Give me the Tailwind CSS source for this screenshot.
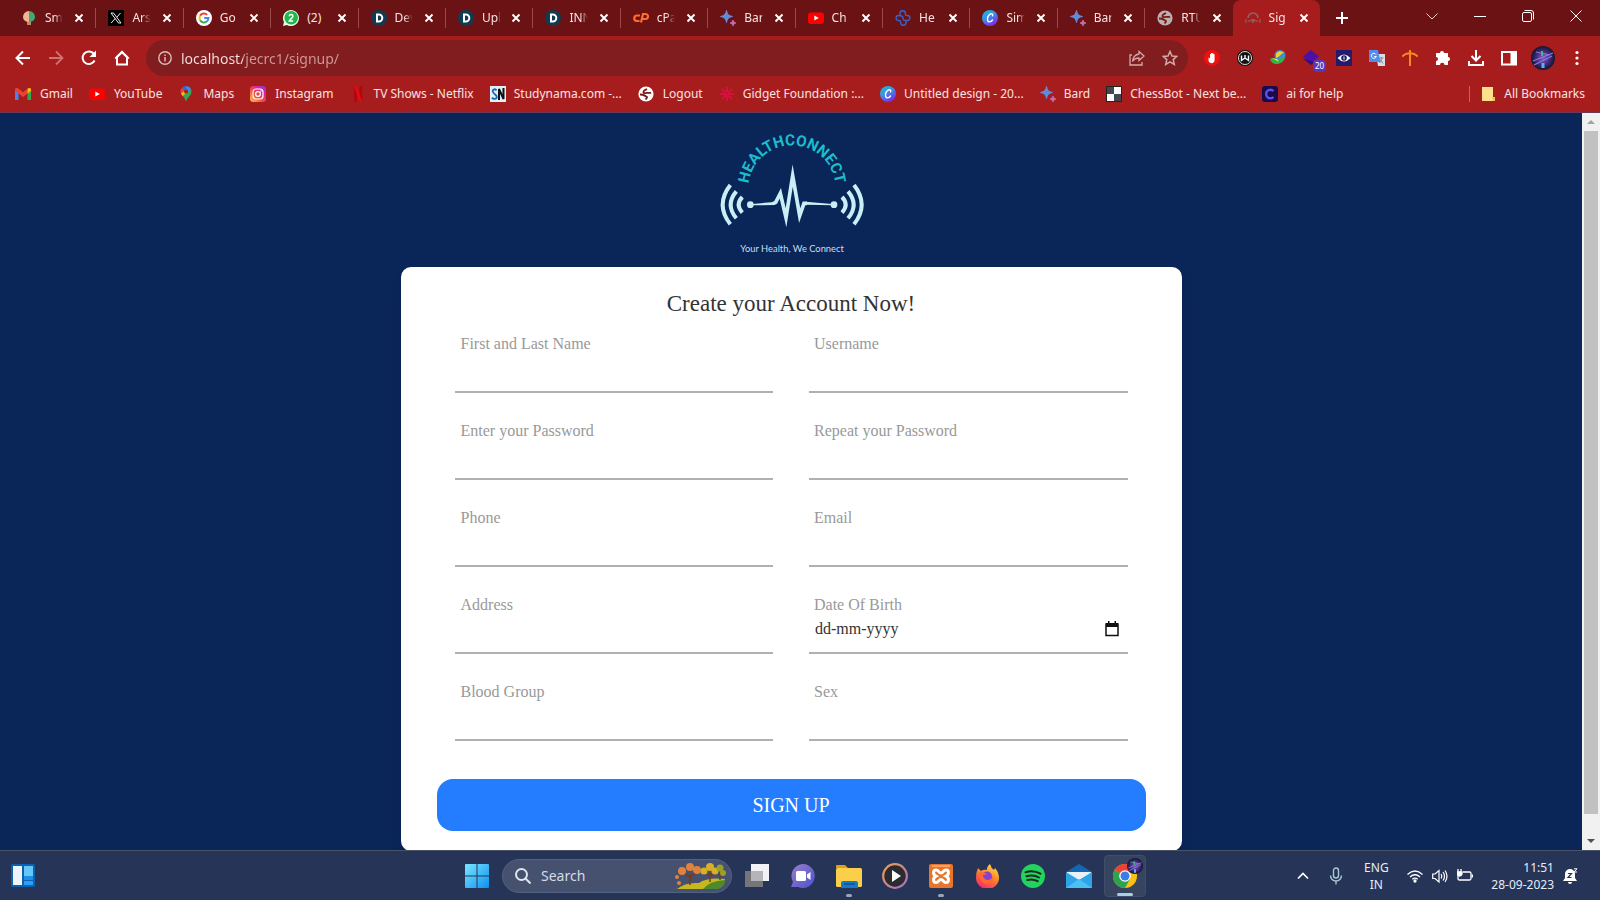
<!DOCTYPE html>
<html lang="en">
<head>
    <meta charset="UTF-8">
    <meta name="viewport" content="width=device-width, initial-scale=1.0">
    <title>Sign Up - HealthConnect</title>
    <script src="https://cdn.jsdelivr.net/npm/@tailwindcss/browser@4"></script>
</head>
<body class="h-screen flex flex-col overflow-hidden bg-[#0a2558] font-['Noto_Sans',sans-serif] text-xs text-[#f7e3e3]">

    <!-- Shared icons -->
    <svg class="absolute size-0" xmlns="http://www.w3.org/2000/svg" aria-hidden="true">
        <defs>
            <linearGradient id="bardFill" x1="0" y1="0" x2="1" y2="1">
                <stop offset="0" stop-color="#e0708a"/><stop offset=".5" stop-color="#4c90e0"/><stop offset="1" stop-color="#b06fc0"/>
            </linearGradient>
            <linearGradient id="canvaFill" x1="0" y1="0" x2=".6" y2="1">
                <stop offset="0" stop-color="#10c4cc"/><stop offset=".5" stop-color="#3f8fe8"/><stop offset="1" stop-color="#7d2ae8"/>
            </linearGradient>
            <linearGradient id="instaFill" x1="0" y1="1" x2="1" y2="0">
                <stop offset="0" stop-color="#ffc94d"/><stop offset=".4" stop-color="#f7523b"/><stop offset=".7" stop-color="#d6249f"/><stop offset="1" stop-color="#7a3ff0"/>
            </linearGradient>
            <linearGradient id="winFill" x1="0" y1="0" x2="1" y2="1">
                <stop offset="0" stop-color="#7be6ff"/><stop offset="1" stop-color="#0b90ee"/>
            </linearGradient>
            <linearGradient id="foxFill" x1=".8" y1="0" x2=".3" y2="1">
                <stop offset="0" stop-color="#ffe24a"/><stop offset=".45" stop-color="#ff8a2a"/><stop offset="1" stop-color="#f5256d"/>
            </linearGradient>
            <linearGradient id="chatFill" x1="0" y1="0" x2="1" y2="1">
                <stop offset="0" stop-color="#9a7fc8"/><stop offset="1" stop-color="#4b50d0"/>
            </linearGradient>
            <linearGradient id="ringFill" x1="0" y1="0" x2="1" y2="1">
                <stop offset="0" stop-color="#f0a050"/><stop offset="1" stop-color="#a070c8"/>
            </linearGradient>
            <radialGradient id="avatarFill">
                <stop offset="0" stop-color="#8a58c8"/><stop offset=".6" stop-color="#3c2a78"/><stop offset="1" stop-color="#15152c"/>
            </radialGradient>
            <symbol id="x" viewBox="0 0 16 16"><path d="M4.5 4.5l7 7M11.5 4.5l-7 7" stroke="#fff" stroke-width="1.9" fill="none"/></symbol>
            <symbol id="bard" viewBox="0 0 16 16">
                <path d="M6.500 .5Q7.200 5.800 12.500 6.500Q7.200 7.200 6.500 12.500Q5.800 7.200 .5 6.500Q5.800 5.800 6.500 .5z" fill="url(#bardFill)" stroke="url(#bardFill)"/>
                <path d="M13 10Q13.300 12.700 16 13Q13.300 13.300 13 16Q12.700 13.300 10 13Q12.700 12.700 13 10z" fill="#c070b0" stroke="#c070b0" stroke-width=".8"/>
            </symbol>
            <symbol id="youtube" viewBox="0 0 16 16"><rect y="2.500" width="16" height="11.500" rx="3" fill="#f00"/><path d="M6.300 5.600v5L10.800 8z" fill="#fff"/></symbol>
            <symbol id="canva" viewBox="0 0 16 16">
                <circle cx="8" cy="8" r="8" fill="url(#canvaFill)"/>
                <path d="M10.600 5.800c.6-1.800-.7-2.500-2.100-1.900C6.200 4.900 5 8 5.600 10.200c.6 2.300 3.200 2.200 4.900-.2" fill="none" stroke="#fff" stroke-width="1.400" stroke-linecap="round"/>
            </symbol>
            <symbol id="dee" viewBox="0 0 16 16">
                <circle cx="8" cy="8" r="8" fill="#123a52"/>
                <path d="M6 4.500h1.800a3.500 3.500 0 0 1 0 7H6z" fill="none" stroke="#fff" stroke-width="2"/>
            </symbol>
            <symbol id="globe" viewBox="0 0 16 16">
                <circle cx="8" cy="8" r="7.600" fill="currentColor"/>
                <path d="M9 3c-1 .5-3 1-3.500 2.500s1 2 2.500 1.500 4 .5 5-.5M2 8.500c2 0 3.500 0 4.500 1s2 .6 2.500 1.500-.5 1.500-1.500 2.500" fill="none" stroke="#7a1617" stroke-width="1.800"/>
            </symbol>
            <symbol id="avatar" viewBox="0 0 24 24">
                <circle cx="12" cy="12" r="12" fill="url(#avatarFill)"/>
                <path d="M2 15l20-8M3 19l18-9M5 6l14 3" stroke="#8c7be0" stroke-width="1.200"/>
                <path d="M11 5v5" stroke="#38c070" stroke-width="2"/><path d="M12 17v5" stroke="#5ab0f0" stroke-width="3"/>
            </symbol>
        </defs>
    </svg>

    <!-- Tab strip -->
    <header class="shrink-0 bg-[#a71d1e]">
        <div class="h-9 flex bg-[#6b1214]">
            <div class="ml-[9px] flex-1 max-w-[1311px] grid grid-cols-15 items-center">
                <div class="flex items-center h-5 pl-3 pr-2 border-r border-[#9b4a4b]">
                    <svg class="size-4 shrink-0" viewBox="0 0 16 16"><path d="M8 1a6 6 0 0 0-6 6c0 3 3 5 6 5z" fill="#f0b490"/><path d="M8 1a6 6 0 0 1 6 6c0 3-3 5-6 5z" fill="#3fa878"/><path d="M6 12h4v3H6z" fill="#c08868"/></svg>
                    <span class="ml-2 flex-1 overflow-hidden whitespace-nowrap [mask-image:linear-gradient(to_right,#000_50%,transparent)]">Sm</span>
                    <button class="ml-2" aria-label="Close tab"><svg class="size-4"><use href="#x"/></svg></button>
                </div>
                <div class="flex items-center h-5 pl-3 pr-2 border-r border-[#9b4a4b]">
                    <svg class="size-4 shrink-0" viewBox="0 0 16 16"><path d="M0 0h16v16H0z" fill="#000"/><path d="M3 3h2.500L13 13h-2.500zM12.500 3L8.800 7.200M3.200 13l4-4.500" fill="none" stroke="#eee"/></svg>
                    <span class="ml-2 flex-1 overflow-hidden whitespace-nowrap [mask-image:linear-gradient(to_right,#000_50%,transparent)]">Ars</span>
                    <button class="ml-2" aria-label="Close tab"><svg class="size-4"><use href="#x"/></svg></button>
                </div>
                <div class="flex items-center h-5 pl-3 pr-2 border-r border-[#9b4a4b]">
                    <svg class="size-4 shrink-0" viewBox="0 0 16 16"><circle cx="8" cy="8" r="8" fill="#fff"/><g fill="none" stroke-width="2"><path d="M11.200 4.900A4.500 4.500 0 0 0 4.100 5.800" stroke="#ea4335"/><path d="M4.100 5.800a4.500 4.500 0 0 0 0 4.400" stroke="#fbbc05"/><path d="M4.100 10.200a4.500 4.500 0 0 0 6.900 1.100" stroke="#34a853"/><path d="M11 11.300A4.500 4.500 0 0 0 12.500 8H8.200" stroke="#4285f4"/></g></svg>
                    <span class="ml-2 flex-1 overflow-hidden whitespace-nowrap [mask-image:linear-gradient(to_right,#000_80%,transparent)]">Go</span>
                    <button class="ml-2" aria-label="Close tab"><svg class="size-4"><use href="#x"/></svg></button>
                </div>
                <div class="flex items-center h-5 pl-3 pr-2 border-r border-[#9b4a4b]">
                    <svg class="size-4 shrink-0" viewBox="0 0 16 16"><path d="M0 16l1-4a8 8 0 1 1 3 3z" fill="#e8fbe8"/><circle cx="8.200" cy="7.800" r="6.800" fill="#1fb84a"/><path d="M6.200 6.200c.2-2.400 4-2.200 3.700.2-.2 1.500-3 2.800-3.600 4.600H10.200" fill="none" stroke="#fff" stroke-width="1.500"/></svg>
                    <span class="ml-2 flex-1 overflow-hidden whitespace-nowrap">(2)</span>
                    <button class="ml-2" aria-label="Close tab"><svg class="size-4"><use href="#x"/></svg></button>
                </div>
                <div class="flex items-center h-5 pl-3 pr-2 border-r border-[#9b4a4b]">
                    <svg class="size-4 shrink-0"><use href="#dee"/></svg>
                    <span class="ml-2 flex-1 overflow-hidden whitespace-nowrap [mask-image:linear-gradient(to_right,#000_50%,transparent)]">Dev</span>
                    <button class="ml-2" aria-label="Close tab"><svg class="size-4"><use href="#x"/></svg></button>
                </div>
                <div class="flex items-center h-5 pl-3 pr-2 border-r border-[#9b4a4b]">
                    <svg class="size-4 shrink-0"><use href="#dee"/></svg>
                    <span class="ml-2 flex-1 overflow-hidden whitespace-nowrap [mask-image:linear-gradient(to_right,#000_90%,transparent)]">Upl</span>
                    <button class="ml-2" aria-label="Close tab"><svg class="size-4"><use href="#x"/></svg></button>
                </div>
                <div class="flex items-center h-5 pl-3 pr-2 border-r border-[#9b4a4b]">
                    <svg class="size-4 shrink-0"><use href="#dee"/></svg>
                    <span class="ml-2 flex-1 overflow-hidden whitespace-nowrap [mask-image:linear-gradient(to_right,#000_60%,transparent)]">INN</span>
                    <button class="ml-2" aria-label="Close tab"><svg class="size-4"><use href="#x"/></svg></button>
                </div>
                <div class="flex items-center h-5 pl-3 pr-2 border-r border-[#9b4a4b]">
                    <svg class="size-4 shrink-0" viewBox="0 0 16 16"><path d="M7 5.500H4a2.700 2.700 0 0 0 0 5.500h2.500M8 12.500L10 4h2.500a2.400 2.400 0 0 1 0 5H9.800" fill="none" stroke="#ff6c2c" stroke-width="2.200"/></svg>
                    <span class="ml-2 flex-1 overflow-hidden whitespace-nowrap [mask-image:linear-gradient(to_right,#000_50%,transparent)]">cPa</span>
                    <button class="ml-2" aria-label="Close tab"><svg class="size-4"><use href="#x"/></svg></button>
                </div>
                <div class="flex items-center h-5 pl-3 pr-2 border-r border-[#9b4a4b]">
                    <svg class="size-4 shrink-0"><use href="#bard"/></svg>
                    <span class="ml-2 flex-1 overflow-hidden whitespace-nowrap [mask-image:linear-gradient(to_right,#000_90%,transparent)]">Bar</span>
                    <button class="ml-2" aria-label="Close tab"><svg class="size-4"><use href="#x"/></svg></button>
                </div>
                <div class="flex items-center h-5 pl-3 pr-2 border-r border-[#9b4a4b]">
                    <svg class="size-4 shrink-0"><use href="#youtube"/></svg>
                    <span class="ml-2 flex-1 overflow-hidden whitespace-nowrap [mask-image:linear-gradient(to_right,#000_70%,transparent)]">Ch</span>
                    <button class="ml-2" aria-label="Close tab"><svg class="size-4"><use href="#x"/></svg></button>
                </div>
                <div class="flex items-center h-5 pl-3 pr-2 border-r border-[#9b4a4b]">
                    <svg class="size-4 shrink-0" viewBox="0 0 16 16"><path d="M5 5.500V3.500a2.700 2.700 0 0 1 5.400 0c0 2 .2 2 2 2a2.500 2.500 0 0 1 0 5H11v2a2.700 2.700 0 0 1-5.400 0c0-2-.2-2-2-2a2.500 2.500 0 0 1 0-5c2 0 4.400 0 4.400 2.500s1 2.500 3 2.500" fill="none" stroke="#3a62c8" stroke-width="1.400"/></svg>
                    <span class="ml-2 flex-1 overflow-hidden whitespace-nowrap [mask-image:linear-gradient(to_right,#000_80%,transparent)]">He</span>
                    <button class="ml-2" aria-label="Close tab"><svg class="size-4"><use href="#x"/></svg></button>
                </div>
                <div class="flex items-center h-5 pl-3 pr-2 border-r border-[#9b4a4b]">
                    <svg class="size-4 shrink-0"><use href="#canva"/></svg>
                    <span class="ml-2 flex-1 overflow-hidden whitespace-nowrap [mask-image:linear-gradient(to_right,#000_60%,transparent)]">Sim</span>
                    <button class="ml-2" aria-label="Close tab"><svg class="size-4"><use href="#x"/></svg></button>
                </div>
                <div class="flex items-center h-5 pl-3 pr-2 border-r border-[#9b4a4b]">
                    <svg class="size-4 shrink-0"><use href="#bard"/></svg>
                    <span class="ml-2 flex-1 overflow-hidden whitespace-nowrap [mask-image:linear-gradient(to_right,#000_90%,transparent)]">Bar</span>
                    <button class="ml-2" aria-label="Close tab"><svg class="size-4"><use href="#x"/></svg></button>
                </div>
                <div class="flex items-center h-5 pl-3 pr-2">
                    <svg class="size-4 shrink-0 text-[#b9b0b0]"><use href="#globe"/></svg>
                    <span class="ml-2 flex-1 overflow-hidden whitespace-nowrap [mask-image:linear-gradient(to_right,#000_60%,transparent)]">RTU</span>
                    <button class="ml-2" aria-label="Close tab"><svg class="size-4"><use href="#x"/></svg></button>
                </div>
                <div class="flex items-center h-9 pl-3 pr-2 rounded-t-lg bg-[#a71d1e]">
                    <svg class="size-4 shrink-0" viewBox="0 0 16 16" fill="none" stroke="#8a6a66"><path d="M3 8a5 5 0 0 1 10 0" stroke-width="1.500"/><path d="M3 11h3l1-2 1 4 1-4 1 2h3M1 9v4M15 9v4"/></svg>
                    <span class="ml-2 flex-1 overflow-hidden whitespace-nowrap [mask-image:linear-gradient(to_right,#000_80%,transparent)]">Sig</span>
                    <button class="ml-2" aria-label="Close tab"><svg class="size-4"><use href="#x"/></svg></button>
                </div>
            </div>
            <button class="w-11 flex justify-center items-center" aria-label="New tab"><svg class="size-4" viewBox="0 0 16 16"><path d="M8 2v12M2 8h12" stroke="#fff" stroke-width="2"/></svg></button>
            <div class="ml-auto h-8 flex">
                <button class="w-12 flex justify-center items-center" aria-label="Search tabs"><svg class="size-3" viewBox="0 0 12 12"><path d="M.5 3.500L6 9l5.500-5.500" fill="none" stroke="#e8d0d0"/></svg></button>
                <button class="w-12 flex justify-center items-center" aria-label="Minimize"><svg class="size-3" viewBox="0 0 12 12"><path d="M0 6.500h12" stroke="#fff"/></svg></button>
                <button class="w-12 flex justify-center items-center" aria-label="Restore"><svg class="size-3" viewBox="0 0 12 12" fill="none" stroke="#fff"><rect x=".5" y="2.500" width="9" height="9" rx="1.500"/><path d="M2.500.500H9a2.500 2.500 0 0 1 2.500 2.500v6.500"/></svg></button>
                <button class="w-12 flex justify-center items-center" aria-label="Close"><svg class="size-3" viewBox="0 0 12 12"><path d="M.5.500l11 11M11.500.500l-11 11" stroke="#fff"/></svg></button>
            </div>
        </div>

        <!-- Toolbar -->
        <div class="pt-1 px-[15px] flex items-center">
            <div class="flex gap-[17px] text-white">
                <button aria-label="Back"><svg class="size-4" viewBox="0 0 16 16" fill="none" stroke="currentColor" stroke-width="2"><path d="M15 8H2M8 1.500L1.500 8 8 14.500"/></svg></button>
                <button class="text-[#d07172]" aria-label="Forward"><svg class="size-4" viewBox="0 0 16 16" fill="none" stroke="currentColor" stroke-width="1.800"><path d="M1 8h13M8 1.500L14.500 8 8 14.500"/></svg></button>
                <button aria-label="Reload"><svg class="size-4" viewBox="0 0 16 16"><path d="M13.600 10.500A6.300 6.300 0 1 1 12.600 3.500" fill="none" stroke="currentColor" stroke-width="2"/><path d="M15 .500V7H8.500z" fill="currentColor"/></svg></button>
                <button aria-label="Home"><svg class="size-4" viewBox="0 0 16 16"><path d="M3 14.500V7L8 2.200 13 7v7.500z" fill="none" stroke="currentColor" stroke-width="2"/><path d="M1 8.500l7-7 7 7" fill="none" stroke="currentColor" stroke-width="1.500"/></svg></button>
            </div>
            <div class="ml-4 flex-1 h-9 pl-3 pr-2.5 flex items-center rounded-full bg-[#821d1f] text-sm">
                <svg class="size-3.5 shrink-0" viewBox="0 0 14 14"><circle cx="7" cy="7" r="6.200" fill="none" stroke="#d8bcbc" stroke-width="1.400"/><path d="M7 6v4.500M7 3.500v1.500" stroke="#d8bcbc" stroke-width="1.500"/></svg>
                <label class="sr-only" for="url">Address</label>
                <input id="url" type="text" value="localhost/jecrc1/signup/" class="ml-[9px] flex-1 h-6 outline-none bg-linear-to-r from-[#f7e3e3] from-[62px] to-[#cf9a9a] to-[62px] bg-clip-text text-transparent">
                <button class="text-[#d3a9a9]" aria-label="Share"><svg class="size-4" viewBox="0 0 16 16" fill="none" stroke="currentColor" stroke-width="1.300"><path d="M3 5H1v10h12v-3M10 1.500l5 4.500-5 4.500V8C7 8 5 9 3.500 11.500 4 7.500 6 4.500 10 4z"/></svg></button>
                <button class="ml-[17px] text-[#d3a9a9]" aria-label="Bookmark"><svg class="size-4" viewBox="0 0 16 16" fill="none" stroke="currentColor" stroke-width="1.500"><path d="M8 1.500l2 4.500 4.800.400-3.600 3.200 1.100 4.800L8 11.900l-4.300 2.500 1.100-4.800L1.200 6.400 6 6z"/></svg></button>
            </div>
            <div class="ml-4 flex items-center gap-[17px]">
                <button aria-label="Ad blocker"><svg class="size-4" viewBox="0 0 16 16"><circle cx="8" cy="8" r="8" fill="#f01010"/><path d="M4.500 7.500l1.500 1V4h1v3V3h1.200v4V3.200h1.200v4V4.300h1.200V10c0 4-5 4-6 1z" fill="#fff"/></svg></button>
                <button aria-label="Wappalyzer"><svg class="size-4" viewBox="0 0 16 16"><circle cx="8" cy="8" r="8" fill="#111"/><circle cx="8" cy="8" r="6.500" fill="none" stroke="#ddd"/><path d="M4.500 5.500v5L8 8l3.500 2.500v-5M8 5v3" fill="none" stroke="#fff" stroke-width="1.400"/></svg></button>
                <button aria-label="Download manager"><svg class="size-4" viewBox="0 0 16 16"><circle cx="10" cy="5.500" r="5.500" fill="#3f8fd0"/><path d="M6 4c2-4 6-3 8-1-3 0-3 3-8 5z" fill="#e8d040"/><path d="M0 9c3-2 5-1 6 1l9-3c-1 5-5 7-8 7-4 0-6-2-7-5z" fill="#38b048"/><path d="M2 8l5 1 2 3z" fill="#f2e84a"/></svg></button>
                <button class="relative" aria-label="Tab stack, 20">
                    <svg class="size-4" viewBox="0 0 16 16"><path d="M8 0l8 6.500L8 13 0 6.500z" fill="#4a10a8"/><path d="M0 8.500L8 15l4-3-4-1z" fill="#360a80"/></svg>
                    <span class="absolute left-2.5 top-2.5 h-3 px-0.5 rounded-sm bg-[#5a35c0] text-[8px] leading-3 text-white">20</span>
                </button>
                <button aria-label="Reader"><svg class="size-4" viewBox="0 0 16 16"><path d="M0 0h16v16H0z" fill="#241a6a"/><path d="M1.500 8Q8 1 14.500 8 8 15 1.500 8z" fill="#fff"/><circle cx="8" cy="8" r="2.800" fill="#241a6a"/><path d="M8 6.500v3" stroke="#fff"/></svg></button>
                <button aria-label="Translate"><svg class="size-4" viewBox="0 0 16 16"><path d="M7 4h9v12H9z" fill="#d8dde2"/><path d="M0 0h9l2.500 12H0z" fill="#4f8df0"/><path d="M7 4.500a2.500 2.500 0 1 0 .3 2H5.200" fill="none" stroke="#fff"/><path d="M10.500 8h4M12.500 7v1c0 2-1 4-2 5M11.500 9.500l2.500 4" stroke="#7a8a98" fill="none"/></svg></button>
                <button aria-label="Pickaxe"><svg class="size-4" viewBox="0 0 16 16" fill="none" stroke="#f58a1c" stroke-width="2"><path d="M8 0v16M0 6.500Q3 3.500 8 3 13 3.500 16 6.500"/></svg></button>
                <button aria-label="Extensions"><svg class="size-4" viewBox="0 0 16 16"><path d="M5 3a2 2 0 0 1 4 0h4v4a2 2 0 0 1 0 4v4H9.500a2.200 2.200 0 0 0-4.500 0H1v-4a2 2 0 0 0 0-4V3z" fill="#fff"/></svg></button>
                <button aria-label="Downloads"><svg class="size-4" viewBox="0 0 16 16" fill="none" stroke="#fff" stroke-width="2"><path d="M8 0v10M3.500 6L8 10.500 12.500 6M1 11v4h14v-4"/></svg></button>
                <button aria-label="Side panel"><svg class="size-4" viewBox="0 0 16 16"><path d="M1 2h14v12.500H1z" fill="none" stroke="#fff" stroke-width="2"/><path d="M9.500 2H15v12H9.500z" fill="#fff"/></svg></button>
                <button class="-mx-[3px]" aria-label="Profile"><svg class="size-6"><use href="#avatar"/></svg></button>
                <button aria-label="Menu"><svg class="size-4" viewBox="0 0 16 16" fill="#fff"><circle cx="8" cy="2.500" r="1.600"/><circle cx="8" cy="8" r="1.600"/><circle cx="8" cy="13.500" r="1.600"/></svg></button>
            </div>
        </div>

        <!-- Bookmarks -->
        <nav class="h-[37px] px-[15px] flex items-center gap-4 border-b border-[#6d3858] whitespace-nowrap">
            <a href="#" class="flex items-center gap-[9px]">
                <svg class="size-4" viewBox="0 0 16 16"><path d="M0 4v10h3.500V6z" fill="#4285f4"/><path d="M16 4v10h-3.500V6z" fill="#34a853"/><path d="M0 3.500C0 2 2 1.500 3.500 2.700L8 6.200l4.500-3.500V7.500L8 11 3.500 7.500 0 5z" fill="#ea4335"/><path d="M12.500 2.700C14 1.500 16 2 16 3.500V5l-3.500 2.500z" fill="#fbbc04"/></svg>
                <span>Gmail</span>
            </a>
            <a href="#" class="flex items-center gap-[9px]"><svg class="size-4"><use href="#youtube"/></svg><span>YouTube</span></a>
            <a href="#" class="flex items-center gap-[9px]">
                <svg class="size-4" viewBox="0 0 16 16"><path d="M8 0a5.500 5.500 0 0 0-4.200 2L8 5.500z" fill="#1a73e8"/><path d="M3.800 2a5.500 5.500 0 0 0-.6 6L8 5z" fill="#ea4335"/><path d="M3 7.500C4 10 7 11 8 16c.8-4.500 5.500-6 5.500-10.500 0-1-.2-2-.7-2.700z" fill="#34a853"/><path d="M3 7.500l1.800 2.700L9.500 5 8 4z" fill="#fbbc04"/><path d="M8 0c2 0 4 1.200 4.900 3L8.500 8z" fill="#4285f4"/><circle cx="8" cy="5.500" r="2" fill="#a71d1e"/></svg>
                <span>Maps</span>
            </a>
            <a href="#" class="flex items-center gap-[9px]">
                <svg class="size-4" viewBox="0 0 16 16"><rect width="16" height="16" rx="3.500" fill="url(#instaFill)"/><g fill="none" stroke="#fff" stroke-width="1.200"><rect x="3" y="3" width="10" height="10" rx="3"/><circle cx="8" cy="8" r="2.400"/></g><circle cx="11" cy="5" r=".8" fill="#fff"/></svg>
                <span>Instagram</span>
            </a>
            <a href="#" class="flex items-center gap-2">
                <svg class="size-4" viewBox="0 0 16 16"><path d="M4 0h2.800v16H4zM9.500 0h2.800v16H9.500z" fill="#b00710"/><path d="M4 0h2.800l5.500 16H9.500z" fill="#e50914"/></svg>
                <span>TV Shows - Netflix</span>
            </a>
            <a href="#" class="flex items-center gap-2">
                <svg class="size-4" viewBox="0 0 16 16"><path d="M0 0h16v16H0z" fill="#dff0fa"/><path d="M6.500 4.500C5.500 2.500 2.500 3 2.800 5.500S7 8.500 6.800 11 3 13.500 2 11.500" fill="none" stroke="#1a66b0" stroke-width="1.800"/><path d="M9 14V3l4.500 10V2" fill="none" stroke="#111" stroke-width="2"/></svg>
                <span>Studynama.com -...</span>
            </a>
            <a href="#" class="flex items-center gap-[9px]"><svg class="size-4 text-white"><use href="#globe"/></svg><span>Logout</span></a>
            <a href="#" class="flex items-center gap-2">
                <svg class="size-4" viewBox="0 0 16 16" stroke="#d8103c" stroke-width="2"><path d="M8 1v14M1 8h14M3 3l10 10M13 3L3 13" stroke-dasharray="5.500 2 20"/></svg>
                <span>Gidget Foundation :...</span>
            </a>
            <a href="#" class="flex items-center gap-2"><svg class="size-4"><use href="#canva"/></svg><span>Untitled design - 20...</span></a>
            <a href="#" class="flex items-center gap-2"><svg class="size-4"><use href="#bard"/></svg><span>Bard</span></a>
            <a href="#" class="flex items-center gap-2">
                <svg class="size-4" viewBox="0 0 16 16"><path d="M0 0h16v16H0z" fill="#222"/><path d="M1 1h7v7H1zM8 8h7v7H8z" fill="#444650"/><path d="M8 1h7v7H8zM1 8h7v7H1z" fill="#fff"/></svg>
                <span>ChessBot - Next be...</span>
            </a>
            <a href="#" class="flex items-center gap-2">
                <svg class="size-4" viewBox="0 0 16 16"><rect width="16" height="16" rx="3" fill="#1b0a4a"/><path d="M11.500 5A4.300 4.300 0 1 0 11.500 11" fill="none" stroke="#5a50f0" stroke-width="2.400"/></svg>
                <span>ai for help</span>
            </a>
            <a href="#" class="ml-auto h-4 pl-2.5 flex items-center gap-2 border-l border-[#c65f60]">
                <svg class="size-4" viewBox="0 0 16 16"><path d="M2 1h11v10h2v4H2z" fill="#ffe08a"/><path d="M12 11h3v4h-2z" fill="#f0c050"/></svg>
                <span>All Bookmarks</span>
            </a>
        </nav>
    </header>

    <!-- Page -->
    <div class="flex-1 min-h-0 flex">
        <main class="flex-1 overflow-hidden flex flex-col items-center font-['Liberation_Serif',serif]">
            <svg class="mt-0.5 shrink-0 w-[200px] h-[150px]" viewBox="0 0 600 450" role="img" aria-label="HealthConnect">
                <path id="arc" d="M172 222a131 131 0 0 1 262 0" fill="none"/>
                <text class="font-['Roboto',sans-serif] font-bold" font-size="46" fill="#1cbccb" text-anchor="middle"><textPath href="#arc" startOffset="50%">HEALTHCONNECT</textPath></text>
                <g fill="none" stroke="#c8eff5" stroke-width="12">
                    <path d="M118 210Q72 269 118 328M136 229Q102 269 136 310M154 246Q132 269 154 293"/>
                    <path d="M489 210Q535 269 489 328M471 229Q505 269 471 310M453 246Q475 269 453 293"/>
                    <path d="M246 266L254 262 268 235 285 308 305 182 326 302 339 265 348 265" stroke-width="11" stroke-miterlimit="10"/>
                </g>
                <g fill="#c8eff5">
                    <circle cx="178" cy="269" r="10"/><circle cx="429" cy="269" r="10"/>
                    <path d="M183 267l67-6v9l-67 1zM424 267l-80-7v9l80 2z"/>
                </g>
                <text class="font-['Lato',sans-serif]" x="303" y="410" font-size="28" fill="#c8dfee" text-anchor="middle">Your Health, We Connect</text>
            </svg>

            <form class="mt-0.5 shrink-0 w-full max-w-[781px] px-9 pt-[21px] pb-5 rounded-[10px] bg-white shadow-lg">
                <h1 class="text-[23px] leading-8 text-center text-[#333]">Create your Account Now!</h1>
                <div class="mt-3 px-[18px] grid grid-cols-2 gap-x-9 gap-y-[26px] text-base leading-6 text-[#999]">
                    <div>
                        <label for="name" class="block pl-1.5">First and Last Name</label>
                        <input id="name" type="text" class="block w-full h-[37px] px-1.5 border-b-2 border-[#b0b0b0] outline-none">
                    </div>
                    <div>
                        <label for="username" class="block pl-[5px]">Username</label>
                        <input id="username" type="text" class="block w-full h-[37px] px-1.5 border-b-2 border-[#b0b0b0] outline-none">
                    </div>
                    <div>
                        <label for="password" class="block pl-1.5">Enter your Password</label>
                        <input id="password" type="password" class="block w-full h-[37px] px-1.5 border-b-2 border-[#b0b0b0] outline-none">
                    </div>
                    <div>
                        <label for="repeat" class="block pl-[5px]">Repeat your Password</label>
                        <input id="repeat" type="password" class="block w-full h-[37px] px-1.5 border-b-2 border-[#b0b0b0] outline-none">
                    </div>
                    <div>
                        <label for="phone" class="block pl-1.5">Phone</label>
                        <input id="phone" type="tel" class="block w-full h-[37px] px-1.5 border-b-2 border-[#b0b0b0] outline-none">
                    </div>
                    <div>
                        <label for="email" class="block pl-[5px]">Email</label>
                        <input id="email" type="email" class="block w-full h-[37px] px-1.5 border-b-2 border-[#b0b0b0] outline-none">
                    </div>
                    <div>
                        <label for="address" class="block pl-1.5">Address</label>
                        <input id="address" type="text" class="block w-full h-[37px] px-1.5 border-b-2 border-[#b0b0b0] outline-none">
                    </div>
                    <div>
                        <label for="dob" class="block pl-[5px]">Date Of Birth</label>
                        <div class="h-[37px] pl-1.5 pr-2 pb-3 flex items-center border-b-2 border-[#b0b0b0]">
                            <input id="dob" type="text" placeholder="dd-mm-yyyy" class="flex-1 outline-none placeholder:text-[#333]">
                            <button type="button" aria-label="Open calendar"><svg class="size-4 block" viewBox="0 0 16 16"><path d="M2 3h12v11.500H2z" fill="none" stroke="#111" stroke-width="1.500"/><path d="M2 2h12v4H2zM4 0h1.500v3H4zM10.500 0H12v3h-1.500z" fill="#111"/></svg></button>
                        </div>
                    </div>
                    <div>
                        <label for="blood" class="block pl-1.5">Blood Group</label>
                        <input id="blood" type="text" class="block w-full h-[37px] px-1.5 border-b-2 border-[#b0b0b0] outline-none">
                    </div>
                    <div>
                        <label for="sex" class="block pl-[5px]">Sex</label>
                        <input id="sex" type="text" class="block w-full h-[37px] px-1.5 border-b-2 border-[#b0b0b0] outline-none">
                    </div>
                </div>
                <button type="submit" class="mt-[38px] w-full h-[52px] rounded-2xl bg-[#247cff] text-xl text-white">SIGN UP</button>
            </form>
        </main>

        <!-- Scrollbar -->
        <div class="w-[18px] flex flex-col items-center justify-between bg-[#f1f1f1]">
            <svg class="w-4 h-[18px] shrink-0" viewBox="0 0 16 18"><path d="M4 11l4-4 4 4z" fill="#a3a3a3"/></svg>
            <div class="flex-1 w-3.5 bg-[#c1c1c1]"></div>
            <div class="h-[18px]"></div>
            <svg class="w-4 h-[18px] shrink-0" viewBox="0 0 16 18"><path d="M4 7l4 4 4-4z" fill="#505050"/></svg>
        </div>
    </div>

    <!-- Taskbar -->
    <footer class="h-[50px] shrink-0 grid grid-cols-[1fr_auto_1fr] items-center bg-[#263557] border-t border-[#4a5364] text-[#e8edf5]">
        <button class="ml-[11px] justify-self-start" aria-label="Widgets">
            <svg class="size-6" viewBox="0 0 24 24"><rect width="24" height="23" rx="2" fill="#0c62b0"/><path d="M2 2h9v19H2z" fill="#f0f4f8"/><path d="M13 2h9v10h-9z" fill="#63c8f5"/><path d="M13 12h9v4h-9z" fill="#1f8ee8"/><path d="M13 17h9v4h-9z" fill="#2f9ff2"/></svg>
        </button>
        <div class="pl-0.5 flex items-center gap-1">
            <button class="w-[42px] h-[42px] flex justify-center items-center" aria-label="Start"><svg class="size-6" viewBox="0 0 24 24"><path d="M0 1q0-1 1-1h10.500v11.500H0zM12.500 0H23q1 0 1 1v10.500H12.500zM0 12.500h11.500V24H1q-1 0-1-1zM12.500 12.500H24V23q0 1-1 1H12.500z" fill="url(#winFill)"/></svg></button>
            <label class="w-[230px] h-[34px] pl-3 pr-1 flex items-center rounded-full bg-[#45516e] border border-[#536080]">
                <svg class="size-4 shrink-0" viewBox="0 0 16 16" fill="none" stroke="#dfe5ee" stroke-width="2"><circle cx="6.500" cy="6.500" r="5.500"/><path d="M10.500 10.500l5 5"/></svg>
                <input type="search" placeholder="Search" aria-label="Search" class="ml-2.5 flex-1 min-w-0 text-sm outline-none placeholder:text-[#d5dbe6]">
                <svg class="w-[54px] h-7 shrink-0" viewBox="0 0 54 28">
                    <path d="M4 27q8-7 22-6 8-6 26-4-1 9-9 10z" fill="#c8b820"/><path d="M30 27q6-8 22-9 0 8-8 9z" fill="#4f8a2a"/>
                    <path d="M17 23V12M17 16l-5-5M17 16l7-7M37 20V11M37 14l-5-4M37 14l6-5M47 18v-8" stroke="#7a3a1a" stroke-width="1.500"/>
                    <g fill="#e0823c"><circle cx="9" cy="9" r="4"/><circle cx="17" cy="5" r="4"/><circle cx="24" cy="8" r="4"/><circle cx="4" cy="15" r="2"/><circle cx="6" cy="21" r="2"/></g>
                    <g fill="#d8b028"><circle cx="31" cy="9" r="3.500"/><circle cx="37" cy="5" r="4"/><circle cx="42" cy="9" r="3.500"/></g>
                    <g fill="#9aa028"><circle cx="47" cy="6" r="3.500"/><circle cx="50" cy="11" r="3"/></g>
                </svg>
            </label>
            <button class="w-[42px] h-[42px] flex justify-center items-center" aria-label="Task view"><svg class="size-6" viewBox="0 0 24 24"><path d="M0 7h18v16H0z" fill="#74767a"/><path d="M6 0h18v17H6z" fill="#f2f2f4"/><path d="M6 7h12v10H6z" fill="#b4b5b8"/></svg></button>
            <button class="w-[42px] h-[42px] flex justify-center items-center" aria-label="Chat"><svg class="size-6" viewBox="0 0 24 24"><path d="M12 0a12 12 0 1 1-5 23H0l2-5A12 12 0 0 1 12 0z" fill="url(#chatFill)"/><rect x="5" y="7" width="10" height="10" rx="1.500" fill="#fff"/><path d="M16 10.500l3.500-2.500v8L16 13.500z" fill="#fff"/></svg></button>
            <button class="relative w-[42px] h-[42px] flex justify-center items-center" aria-label="File Explorer">
                <svg class="w-[26px] h-6" viewBox="0 0 26 24"><path d="M0 2q0-1 1-1h8l3 3H0z" fill="#e0a010"/><rect y="4" width="26" height="19" rx="1.500" fill="#fbcf4a"/><path d="M5 24v-5q0-2 2-2h13q2 0 2 2v5z" fill="#1878c8"/><path d="M8 20h11" stroke="#0c4f90" stroke-width="1.500"/></svg>
                <span class="absolute bottom-0 w-1.5 h-[3px] rounded-full bg-[#9ba5b8]"></span>
            </button>
            <button class="w-[42px] h-[42px] flex justify-center items-center" aria-label="Media Player"><svg class="size-[26px]" viewBox="0 0 26 26"><circle cx="13" cy="13" r="11.800" fill="#2c2c30" stroke="url(#ringFill)" stroke-width="2.200"/><path d="M10 7v12l9-6z" fill="#fff"/></svg></button>
            <button class="relative w-[42px] h-[42px] flex justify-center items-center" aria-label="XAMPP">
                <svg class="size-6" viewBox="0 0 24 24"><rect width="24" height="24" rx="2" fill="#e8752a"/><path d="M3 2h18" stroke="#f8d0b0"/><path d="M7 6c3 0 2.500 3 5 3s2-3 5-3 3.500 4.500 0 6.200c3.500 1.800 3 6.300 0 6.300s-2.500-3-5-3-2 3-5 3-3.500-4.500 0-6.300C3.500 10.500 4 6 7 6z" fill="none" stroke="#fff" stroke-width="3"/></svg>
                <span class="absolute bottom-0 w-1.5 h-[3px] rounded-full bg-[#9ba5b8]"></span>
            </button>
            <button class="w-[42px] h-[42px] flex justify-center items-center" aria-label="Firefox"><svg class="size-6" viewBox="0 0 24 24"><path d="M3 4l3 3q3-2 6-1-1-3 3-6 1 4 4 6l1-2q4 5 4 10a11.500 11 0 0 1-23 0Q1 8 3 4z" fill="url(#foxFill)"/><circle cx="12" cy="12.500" r="5" fill="#8a3fd0"/><path d="M4 9q4-2 8 1-2 1-4 1 0 4 4 5 5 0 6-4 1 7-6 8-7-1-8-11z" fill="#ff6a2a"/></svg></button>
            <button class="w-[42px] h-[42px] flex justify-center items-center" aria-label="Spotify"><svg class="size-6" viewBox="0 0 24 24"><circle cx="12" cy="12" r="12" fill="#22d35e"/><path d="M4.500 8.200q8-2.400 15 1.500M5.500 12.200q7-2 12.500 1.300M6.200 16q5.500-1.600 10.500 1.200" fill="none" stroke="#1a2a20" stroke-width="2" stroke-linecap="round"/></svg></button>
            <button class="w-[42px] h-[42px] flex justify-center items-center" aria-label="Mail"><svg class="w-[26px] h-6" viewBox="0 0 26 24"><path d="M0 8L13 0l13 8z" fill="#1468b0"/><path d="M1 8h24v10H1z" fill="#eaf2f8"/><path d="M0 8l13 8 13-8v16H0z" fill="#2ca4e8"/><path d="M0 24l13-9 13 9z" fill="#4cc0f2"/></svg></button>
            <button class="relative w-[42px] h-[42px] flex justify-center items-center rounded bg-[#36445f] border border-[#414e6a]" aria-label="Chrome">
                <svg class="size-6" viewBox="0 0 24 24"><circle cx="12" cy="12" r="12" fill="#fbc116"/><path d="M12 12L1.600 6A12 12 0 0 1 22.400 6z" fill="#ea4335"/><path d="M12 12L1.600 6A12 12 0 0 0 12 24l5-9z" fill="#2fa24f"/><circle cx="12" cy="12" r="5.800" fill="#fff"/><circle cx="12" cy="12" r="4.500" fill="#3b7de8"/></svg>
                <svg class="absolute right-0.5 top-0.5 size-4"><use href="#avatar"/></svg>
                <span class="absolute bottom-0 w-4 h-[3px] rounded-full bg-[#a9cfe0]"></span>
            </button>
        </div>
        <div class="justify-self-end pr-[22px] flex items-center">
            <button aria-label="Hidden icons"><svg class="size-4" viewBox="0 0 16 16"><path d="M3 10.500l5-5 5 5" fill="none" stroke="#fff" stroke-width="1.700"/></svg></button>
            <button class="ml-4" aria-label="Microphone"><svg class="size-[18px]" viewBox="0 0 18 18" fill="none" stroke="#a9c6d2" stroke-width="1.400"><rect x="6.500" y="1" width="5" height="10" rx="2.500"/><path d="M3.500 8.500a5.500 5.500 0 0 0 11 0M9 14v3.500"/></svg></button>
            <button class="ml-[15px] w-8 leading-[17px] text-center">ENG<br>IN</button>
            <button class="ml-[15px] flex items-center gap-[9px]" aria-label="Network, volume and battery">
                <svg class="size-4" viewBox="0 0 16 16" fill="none" stroke="#fff" stroke-width="1.300"><path d="M.5 6.500q7.500-7 15 0M3 9q5-4.500 10 0M5.300 11.300q2.700-2.400 5.400 0"/><circle cx="8" cy="13" r="1" fill="#fff"/></svg>
                <svg class="size-4" viewBox="0 0 16 16" fill="none" stroke="#fff" stroke-width="1.200"><path d="M.7 6v4.500H3L7 14V2.500L3 6zM9 6q1.500 2.200 0 4.500M11 4q3 4.200 0 8.500M13 2.500q4 5.700 0 11.500"/></svg>
                <svg class="size-4" viewBox="0 0 16 16" fill="none" stroke="#fff" stroke-width="1.300"><path d="M6 4h6.500Q14 4 14 5.500v5Q14 12 12.500 12h-10Q1 12 1 10.500V8M15.500 6.500v3"/><path d="M1 1v3M4 1v3M0 4h5v2q-.500 2-2.500 2T0 6z" fill="#fff"/></svg>
            </button>
            <button class="ml-[18px] leading-[17px] text-right">11:51<br>28-09-2023</button>
            <button class="ml-2" aria-label="Notifications"><svg class="size-4" viewBox="0 0 16 16"><path d="M8 1a5 5 0 0 0-5 5v4l-2 3h14l-2-3V6a5 5 0 0 0-5-5zM6 14h4a2 2 0 0 1-4 0z" fill="#fff"/><path d="M6 5.500h3.500L6 9.500h3.500" fill="none" stroke="#263557" stroke-width="1.200"/><path d="M12 .8h3L12 4h3" fill="none" stroke="#fff"/></svg></button>
        </div>
    </footer>
</body>
</html>
